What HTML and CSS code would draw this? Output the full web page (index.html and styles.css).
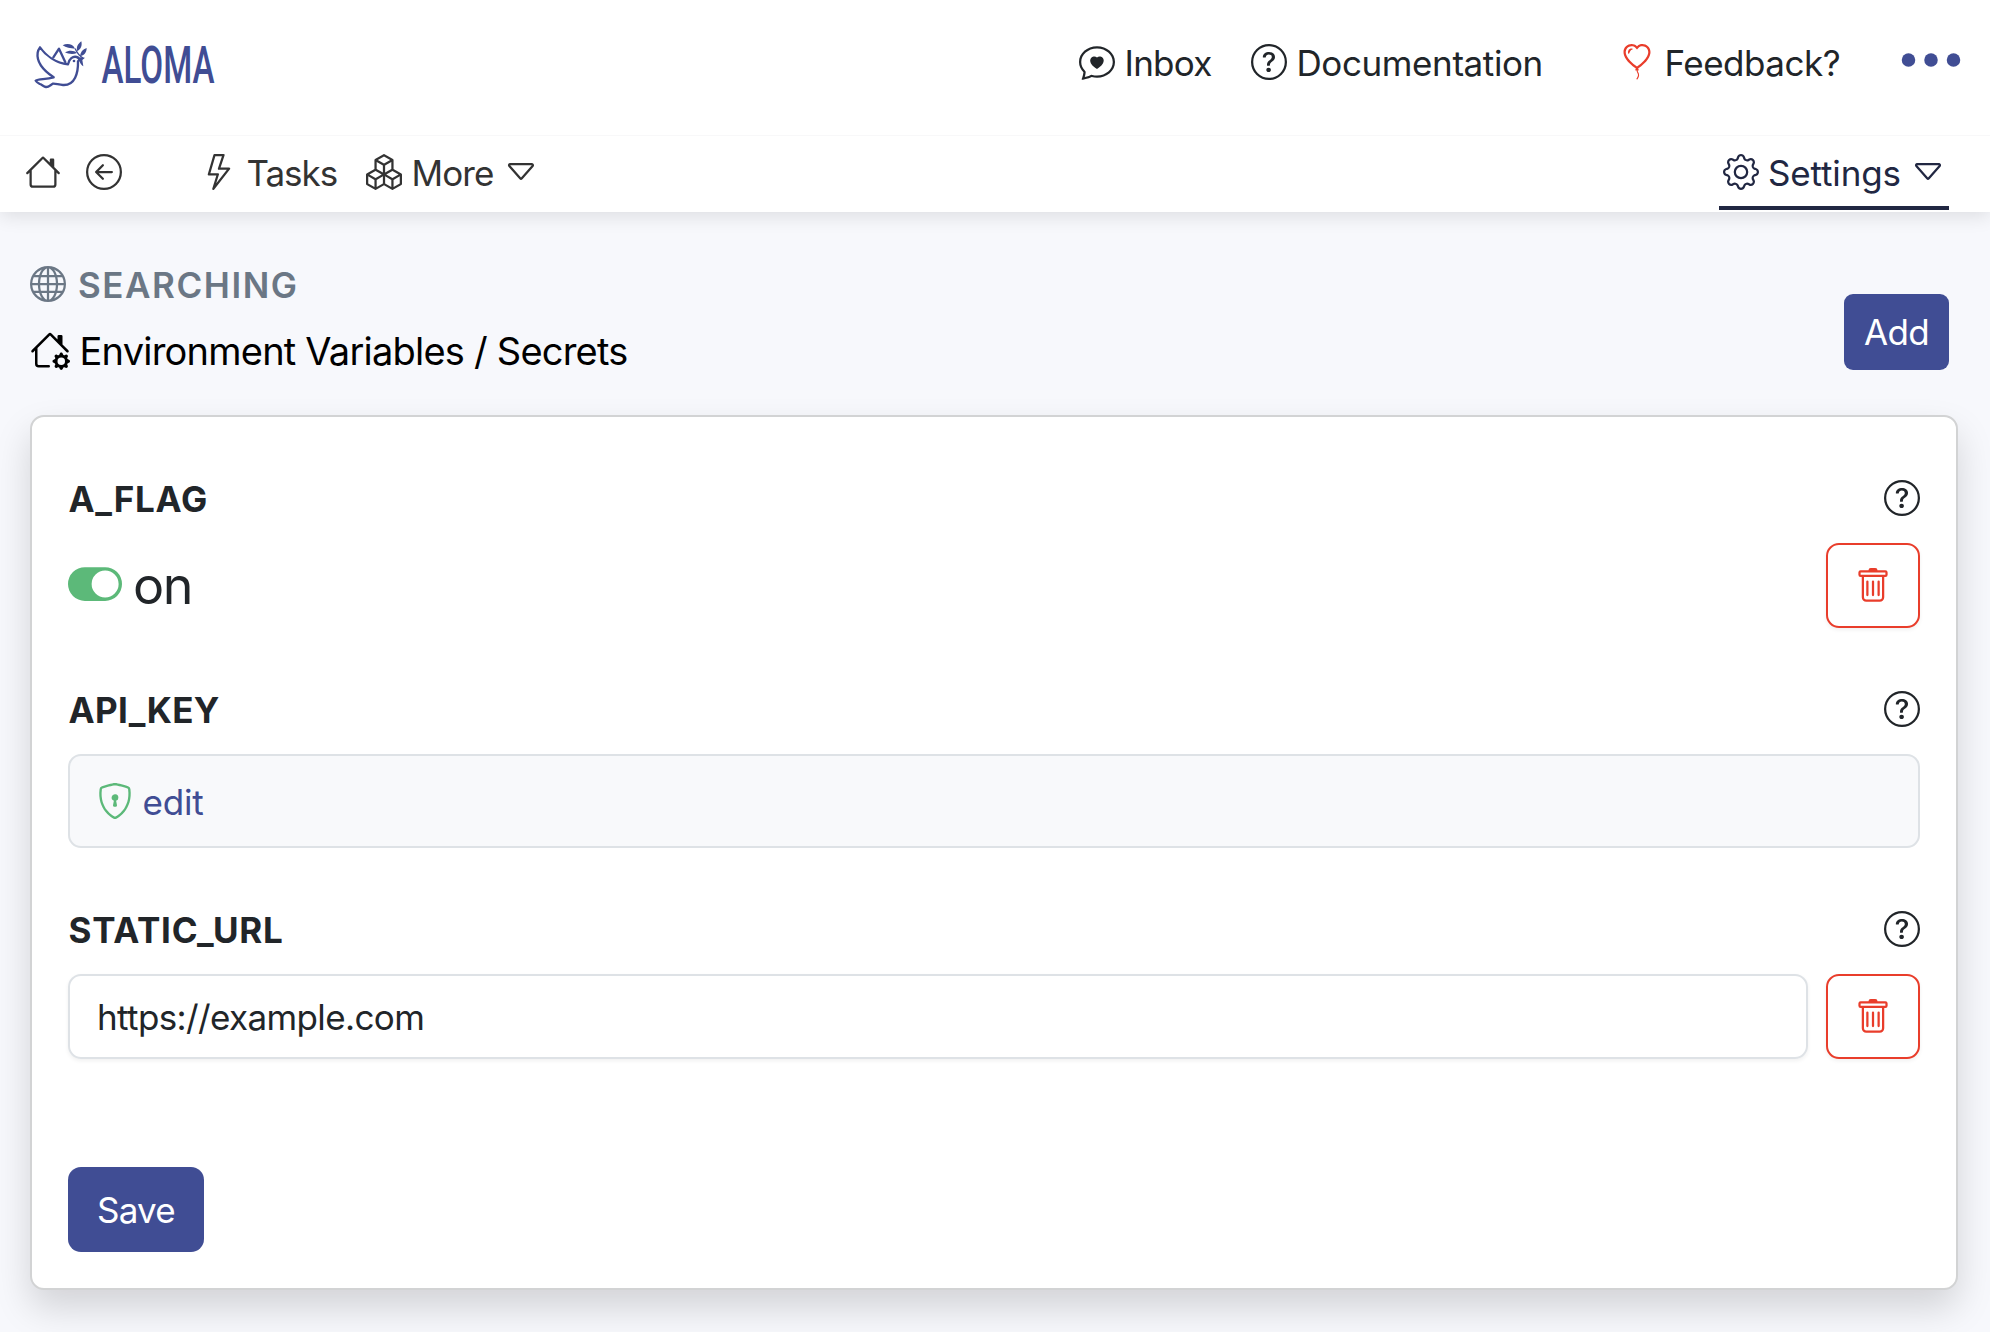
FILE: index.html
```html
<!DOCTYPE html>
<html lang="en">
<head>
<meta charset="utf-8">
<title>Environment Variables / Secrets</title>
<link rel="stylesheet" href="styles.css">
</head>
<body>
<svg class="sprite" aria-hidden="true">
  <symbol id="question" viewBox="0 0 16 16"><path d="M8 15A7 7 0 1 1 8 1a7 7 0 0 1 0 14m0 1A8 8 0 1 0 8 0a8 8 0 0 0 0 16"/><path d="M5.255 5.786a.237.237 0 0 0 .241.247h.825c.138 0 .248-.113.266-.25.09-.656.54-1.134 1.342-1.134.686 0 1.314.343 1.314 1.168 0 .635-.374.927-.965 1.371-.673.489-1.206 1.06-1.168 1.987l.003.217a.25.25 0 0 0 .25.246h.811a.25.25 0 0 0 .25-.25v-.105c0-.718.273-.927 1.01-1.486.609-.463 1.244-.977 1.244-2.056 0-1.511-1.276-2.241-2.673-2.241-1.267 0-2.655.59-2.75 2.286m1.557 5.763c0 .533.425.927 1.01.927.609 0 1.028-.394 1.028-.927 0-.552-.42-.94-1.029-.94-.584 0-1.009.388-1.009.94"/></symbol>
  <symbol id="caret" viewBox="0 0 16 16"><path d="M3.204 5h9.592L8 10.481zm-.753.659 4.796 5.48a1 1 0 0 0 1.506 0l4.796-5.48c.566-.647.106-1.659-.753-1.659H3.204a1 1 0 0 0-.753 1.659"/></symbol>
  <symbol id="trash" viewBox="0 0 16 16"><path d="M5.5 5.5A.5.5 0 0 1 6 6v6a.5.5 0 0 1-1 0V6a.5.5 0 0 1 .5-.5m2.5 0a.5.5 0 0 1 .5.5v6a.5.5 0 0 1-1 0V6a.5.5 0 0 1 .5-.5m3 .5a.5.5 0 0 0-1 0v6a.5.5 0 0 0 1 0z"/><path d="M14.5 3a1 1 0 0 1-1 1H13v9a2 2 0 0 1-2 2H5a2 2 0 0 1-2-2V4h-.5a1 1 0 0 1-1-1V2a1 1 0 0 1 1-1H6a1 1 0 0 1 1-1h2a1 1 0 0 1 1 1h3.5a1 1 0 0 1 1 1zM4.118 4 4 4.059V13a1 1 0 0 0 1 1h6a1 1 0 0 0 1-1V4.059L11.882 4zM2.5 3h11V2h-11z"/></symbol>
</svg>

<header class="topbar">
  <a class="brand">
    <svg class="dove" viewBox="100 60 165 150">
      <g fill="none" stroke="currentColor" stroke-width="7" stroke-linejoin="round" stroke-linecap="round">
        <path d="M121 82C138 106 168 129 205 133C208 116 220 108 231 111C235 112 238 115 241 118L235 124C236 158 226 197 190 195C178 195 168 190 160 191C152 195 147 202 139 201C133 200 128 195 121 192C115 189 110 187 108 182C117 176 137 179 162 172C132 152 110 126 114 98C115 91 118 86 121 82Z"/>
        <path d="M161 112L178 86L197 127"/>
        <path d="M250 114C240 108 233 101 227 87" stroke-width="4"/>
      </g>
      <circle cx="223" cy="123" r="4"/>
      <path d="M189 76C202 69 220 72 226 86C212 85 199 83 189 76ZM196 97C208 90 224 91 232 99C220 104 206 102 196 97ZM245 64C248 77 244 87 233 94C229 82 234 72 245 64ZM261 84C261 97 254 106 241 109C242 96 249 88 261 84ZM240 112L256 113L248 120L251 139C241 133 238 123 240 112Z"/>
    </svg>
    <svg class="wordmark" viewBox="0 0 120 60"><text transform="translate(1.5 43) scale(.638 1)">ALOMA</text></svg>
  </a>
  <nav class="links">
    <a class="item inbox"><svg class="icon" viewBox="0 0 16 16"><path fill-rule="evenodd" d="M2.965 12.695a1 1 0 0 0-.287-.801C1.618 10.83 1 9.468 1 8c0-3.192 3.004-6 7-6s7 2.808 7 6-3.004 6-7 6a8 8 0 0 1-2.088-.272 1 1 0 0 0-.711.074c-.387.196-1.24.57-2.634.893a11 11 0 0 0 .398-2m-.8 3.108.02-.004c1.83-.363 2.948-.842 3.468-1.105A9 9 0 0 0 8 15c4.418 0 8-3.134 8-7s-3.582-7-8-7-8 3.134-8 7c0 1.76.743 3.37 1.97 4.6a10.4 10.4 0 0 1-.524 2.318l-.003.011a11 11 0 0 1-.244.637c-.079.186.074.394.273.362a22 22 0 0 0 .693-.125M8 5.993c1.664-1.711 5.825 1.283 0 5.132-5.825-3.85-1.664-6.843 0-5.132"/></svg><span>Inbox</span></a>
    <a class="item docs"><svg class="icon"><use href="#question"/></svg><span>Documentation</span></a>
    <a class="item feedback"><svg class="icon danger" viewBox="0 0 16 16"><path fill-rule="evenodd" d="m8 2.42-.717-.737c-1.13-1.161-3.243-.777-4.01.72-.35.685-.451 1.707.236 3.062C4.16 6.753 5.52 8.32 8 10.042c2.479-1.723 3.839-3.29 4.491-4.577.687-1.355.587-2.377.236-3.061-.767-1.498-2.88-1.882-4.01-.721zm-.49 8.5c-10.78-7.44-3-13.155.359-10.063q.068.062.132.129.065-.067.132-.129c3.36-3.092 11.137 2.624.357 10.063l.235.468a.25.25 0 1 1-.448.224l-.008-.017c.008.11.02.202.037.29.054.27.161.488.419 1.003.288.578.235 1.15.076 1.629-.157.469-.422.867-.588 1.115l-.004.007a.25.25 0 1 1-.416-.278c.168-.252.4-.6.533-1.003.133-.396.163-.824-.049-1.246l-.013-.028c-.24-.48-.38-.758-.448-1.102a3 3 0 0 1-.052-.45l-.04.08a.25.25 0 1 1-.447-.224l.235-.468ZM6.013 2.06c-.649-.18-1.483.083-1.85.798-.131.258-.245.689-.08 1.335.063.244.414.198.487-.043.21-.697.627-1.447 1.359-1.692.217-.073.304-.337.084-.398"/></svg><span>Feedback?</span></a>
    <a class="dots"><svg viewBox="0 0 16 16"><circle cx="3" cy="8" r="1.5"/><circle cx="8" cy="8" r="1.5"/><circle cx="13" cy="8" r="1.5"/></svg></a>
  </nav>
</header>

<nav class="subnav">
  <a class="item"><svg class="icon" viewBox="0 0 16 16"><path d="M8.707 1.5a1 1 0 0 0-1.414 0L.646 8.146a.5.5 0 0 0 .708.708L2 8.207V13.5A1.5 1.5 0 0 0 3.5 15h9a1.5 1.5 0 0 0 1.5-1.5V8.207l.646.647a.5.5 0 0 0 .708-.708L13 5.793V2.5a.5.5 0 0 0-.5-.5h-1a.5.5 0 0 0-.5.5v1.293zM13 7.207V13.5a.5.5 0 0 1-.5.5h-9a.5.5 0 0 1-.5-.5V7.207l5-5z"/></svg></a>
  <a class="item back"><svg class="icon" viewBox="0 0 16 16"><path fill-rule="evenodd" d="M1 8a7 7 0 1 0 14 0A7 7 0 0 0 1 8m15 0A8 8 0 1 1 0 8a8 8 0 0 1 16 0m-4.5-.5a.5.5 0 0 1 0 1H5.707l2.147 2.146a.5.5 0 0 1-.708.708l-3-3a.5.5 0 0 1 0-.708l3-3a.5.5 0 1 1 .708.708L5.707 7.5z"/></svg></a>
  <a class="item tasks"><svg class="icon" viewBox="0 0 16 16"><path d="M5.52.359A.5.5 0 0 1 6 0h4a.5.5 0 0 1 .474.658L8.694 6H12.5a.5.5 0 0 1 .395.807l-7 9a.5.5 0 0 1-.873-.454L6.823 9.5H3.5a.5.5 0 0 1-.48-.641zM6.374 1 4.168 8.5H7.5a.5.5 0 0 1 .478.647L6.78 13.04 11.478 7H8a.5.5 0 0 1-.474-.658L9.306 1z"/></svg><span>Tasks</span></a>
  <a class="item more"><svg class="icon" viewBox="0 0 16 16"><path d="M7.752.066a.5.5 0 0 1 .496 0l3.75 2.143a.5.5 0 0 1 .252.434v3.995l3.498 2A.5.5 0 0 1 16 9.07v4.286a.5.5 0 0 1-.252.434l-3.75 2.143a.5.5 0 0 1-.496 0l-3.502-2-3.502 2.001a.5.5 0 0 1-.496 0l-3.75-2.143A.5.5 0 0 1 0 13.357V9.071a.5.5 0 0 1 .252-.434L3.75 6.638V2.643a.5.5 0 0 1 .252-.434zM4.25 7.504 1.508 9.071l2.742 1.567 2.742-1.567zM7.5 9.933l-2.75 1.571v3.134l2.75-1.571zm1 3.134 2.75 1.571v-3.134L8.5 9.933zm.508-3.996 2.742 1.567 2.742-1.567-2.742-1.567zm2.242-2.433V3.504L8.5 5.076V8.21zM7.5 8.21V5.076L4.75 3.504v3.134zM5.258 2.643 8 4.21l2.742-1.567L8 1.076zM15 9.933l-2.75 1.571v3.134L15 13.067zM3.75 14.638v-3.134L1 9.933v3.134z"/></svg><span>More</span><svg class="icon caret"><use href="#caret"/></svg></a>
  <a class="item settings"><svg class="icon" viewBox="0 0 16 16"><path d="M8 4.754a3.246 3.246 0 1 0 0 6.492 3.246 3.246 0 0 0 0-6.492M5.754 8a2.246 2.246 0 1 1 4.492 0 2.246 2.246 0 0 1-4.492 0"/><path d="M9.796 1.343c-.527-1.79-3.065-1.79-3.592 0l-.094.319a.873.873 0 0 1-1.255.52l-.292-.16c-1.64-.892-3.433.902-2.54 2.541l.159.292a.873.873 0 0 1-.52 1.255l-.319.094c-1.79.527-1.79 3.065 0 3.592l.319.094a.873.873 0 0 1 .52 1.255l-.16.292c-.892 1.64.901 3.434 2.541 2.54l.292-.159a.873.873 0 0 1 1.255.52l.094.319c.527 1.79 3.065 1.79 3.592 0l.094-.319a.873.873 0 0 1 1.255-.52l.292.16c1.64.893 3.434-.902 2.54-2.541l-.159-.292a.873.873 0 0 1 .52-1.255l.319-.094c1.79-.527 1.79-3.065 0-3.592l-.319-.094a.873.873 0 0 1-.52-1.255l.16-.292c.893-1.64-.902-3.433-2.541-2.54l-.292.159a.873.873 0 0 1-1.255-.52zm-2.633.283c.246-.835 1.428-.835 1.674 0l.094.319a1.873 1.873 0 0 0 2.693 1.115l.291-.16c.764-.415 1.6.42 1.184 1.185l-.159.292a1.873 1.873 0 0 0 1.116 2.692l.318.094c.835.246.835 1.428 0 1.674l-.319.094a1.873 1.873 0 0 0-1.115 2.693l.16.291c.415.764-.42 1.6-1.185 1.184l-.291-.159a1.873 1.873 0 0 0-2.693 1.116l-.094.318c-.246.835-1.428.835-1.674 0l-.094-.319a1.873 1.873 0 0 0-2.692-1.115l-.292.16c-.764.415-1.6-.42-1.184-1.185l.159-.291A1.873 1.873 0 0 0 1.945 8.93l-.319-.094c-.835-.246-.835-1.428 0-1.674l.319-.094A1.873 1.873 0 0 0 3.06 4.377l-.16-.292c-.415-.764.42-1.6 1.185-1.184l.292.159a1.873 1.873 0 0 0 2.692-1.115z"/></svg><span>Settings</span><svg class="icon caret"><use href="#caret"/></svg></a>
</nav>

<main class="page">
  <div class="page-head">
    <div class="titles">
      <div class="workspace"><svg class="icon" viewBox="0 0 16 16"><path d="M0 8a8 8 0 1 1 16 0A8 8 0 0 1 0 8m7.5-6.923c-.67.204-1.335.82-1.887 1.855A8 8 0 0 0 5.145 4H7.5zM4.09 4a9.3 9.3 0 0 1 .64-1.539 7 7 0 0 1 .597-.933A7.03 7.03 0 0 0 2.255 4zm-.582 3.5c.03-.877.138-1.718.312-2.5H1.674a7 7 0 0 0-.656 2.5zM4.847 5a12.5 12.5 0 0 0-.338 2.5H7.5V5zM8.5 5v2.5h2.99a12.5 12.5 0 0 0-.337-2.5zM4.51 8.5a12.5 12.5 0 0 0 .337 2.5H7.5V8.5zm3.99 0V11h2.653c.187-.765.306-1.608.338-2.5zM5.145 12q.208.58.468 1.068c.552 1.035 1.218 1.65 1.887 1.855V12zm.182 2.472a7 7 0 0 1-.597-.933A9.3 9.3 0 0 1 4.09 12H2.255a7 7 0 0 0 3.072 2.472M3.82 11a13.7 13.7 0 0 1-.312-2.5h-2.49c.062.89.291 1.733.656 2.5zm6.853 3.472A7 7 0 0 0 13.745 12H11.91a9.3 9.3 0 0 1-.64 1.539 7 7 0 0 1-.597.933M8.5 12v2.923c.67-.204 1.335-.82 1.887-1.855q.26-.487.468-1.068zm3.68-1h2.146c.365-.767.594-1.61.656-2.5h-2.49a13.7 13.7 0 0 1-.312 2.5m2.802-3.5a7 7 0 0 0-.656-2.5H12.18c.174.782.282 1.623.312 2.5zM11.27 2.461c.247.464.462.98.64 1.539h1.835a7 7 0 0 0-3.072-2.472c.218.284.418.598.597.933M10.855 4a8 8 0 0 0-.468-1.068C9.835 1.897 9.17 1.282 8.5 1.077V4z"/></svg><span>SEARCHING</span></div>
      <h1 class="title"><svg class="icon" viewBox="0 0 16 16"><path d="M7.293 1.5a1 1 0 0 1 1.414 0L11 3.793V2.5a.5.5 0 0 1 .5-.5h1a.5.5 0 0 1 .5.5v3.293l2.354 2.353a.5.5 0 0 1-.708.708L8 2.207l-5 5V13.5a.5.5 0 0 0 .5.5h4a.5.5 0 0 1 0 1h-4A1.5 1.5 0 0 1 2 13.5V8.207l-.646.647a.5.5 0 1 1-.708-.708z"/><path d="M11.886 9.46c.18-.613 1.048-.613 1.229 0l.043.148a.64.64 0 0 0 .921.382l.136-.074c.561-.306 1.175.308.87.869l-.075.136a.64.64 0 0 0 .382.92l.149.045c.612.18.612 1.048 0 1.229l-.15.043a.64.64 0 0 0-.38.921l.074.136c.305.561-.309 1.175-.87.87l-.136-.075a.64.64 0 0 0-.92.382l-.045.149c-.18.612-1.048.612-1.229 0l-.043-.15a.64.64 0 0 0-.921-.38l-.136.074c-.561.305-1.175-.309-.87-.87l.075-.136a.64.64 0 0 0-.382-.92l-.148-.045c-.613-.18-.613-1.048 0-1.229l.148-.043a.64.64 0 0 0 .382-.921l-.074-.136c-.306-.561.308-1.175.869-.87l.136.075a.64.64 0 0 0 .92-.382zM14 12.5a1.5 1.5 0 1 0-3 0 1.5 1.5 0 0 0 3 0"/></svg><span>Environment Variables / Secrets</span></h1>
    </div>
    <button class="btn add"><span>Add</span></button>
  </div>

  <form class="card">
    <section class="field">
      <div class="field-head"><label class="flag">A_FLAG</label><svg class="icon"><use href="#question"/></svg></div>
      <div class="field-row">
        <div class="toggle"><svg viewBox="0 0 16 16"><path d="M5 3a5 5 0 0 0 0 10h6a5 5 0 0 0 0-10zm6 9a4 4 0 1 1 0-8 4 4 0 0 1 0 8"/></svg><span>on</span></div>
        <button type="button" class="delete"><svg class="icon"><use href="#trash"/></svg></button>
      </div>
    </section>
    <section class="field">
      <div class="field-head"><label class="key">API_KEY</label><svg class="icon"><use href="#question"/></svg></div>
      <div class="secret"><svg class="icon" viewBox="0 0 16 16"><path d="M5.338 1.59a61 61 0 0 0-2.837.856.48.48 0 0 0-.328.39c-.554 4.157.726 7.19 2.253 9.188a10.7 10.7 0 0 0 2.287 2.233c.346.244.652.42.893.533q.18.085.293.118a1 1 0 0 0 .101.025 1 1 0 0 0 .1-.025q.114-.034.294-.118c.24-.113.547-.29.893-.533a10.7 10.7 0 0 0 2.287-2.233c1.527-1.997 2.807-5.031 2.253-9.188a.48.48 0 0 0-.328-.39c-.651-.213-1.75-.56-2.837-.855C9.552 1.29 8.531 1.067 8 1.067c-.53 0-1.552.223-2.662.524zM5.072.56C6.157.265 7.31 0 8 0s1.843.265 2.928.56c1.11.3 2.229.655 2.887.87a1.54 1.54 0 0 1 1.044 1.262c.596 4.477-.787 7.795-2.465 9.99a11.8 11.8 0 0 1-2.517 2.453 7 7 0 0 1-1.048.625c-.28.132-.581.24-.829.24s-.548-.108-.829-.24a7 7 0 0 1-1.048-.625 11.8 11.8 0 0 1-2.517-2.453C1.928 10.487.545 7.169 1.141 2.692A1.54 1.54 0 0 1 2.185 1.43 63 63 0 0 1 5.072.56"/><path d="M9.5 6.5a1.5 1.5 0 0 1-1 1.415l.385 1.99a.5.5 0 0 1-.491.595h-.788a.5.5 0 0 1-.49-.595l.384-1.99a1.5 1.5 0 1 1 2-1.415"/></svg><a>edit</a></div>
    </section>
    <section class="field">
      <div class="field-head"><label class="url">STATIC_URL</label><svg class="icon"><use href="#question"/></svg></div>
      <div class="field-row">
        <div class="input"><span>https://example.com</span></div>
        <button type="button" class="delete"><svg class="icon"><use href="#trash"/></svg></button>
      </div>
    </section>
    <button type="button" class="btn save"><span>Save</span></button>
  </form>
</main>
</body>
</html>
```

FILE: styles.css
```css
* { box-sizing: border-box; }

body {
  margin: 0;
  height: 1332px;
  overflow: hidden;
  background: #f7f8fc;
  color: #212529;
  font-family: Inter, "Liberation Sans", sans-serif;
  font-size: 35px;
  line-height: 54px;
}

.sprite { display: none; }
svg { display: block; flex: none; fill: currentColor; }
.icon { width: 36px; height: 36px; }
.danger { color: #e93d2b; }
span, label { white-space: nowrap; }

.topbar {
  position: relative;
  z-index: 2;
  display: flex;
  justify-content: space-between;
  height: 136px;
  padding: 0 23px 0 33px;
  background: #fff;
  border-bottom: 1px solid #f8f8f9;
}

.brand { display: flex; align-items: flex-start; gap: 12px; padding-top: 40px; color: #404d94; }
.dove { width: 55px; height: 50px; }
.wordmark { width: 120px; height: 60px; overflow: visible; font-family: Roboto, sans-serif; font-size: 52px; font-weight: 500; }

.links { display: flex; align-items: center; height: 124px; }
.item { display: flex; align-items: center; gap: 9.5px; }
.item span { padding-top: 2px; }
.inbox { width: 172px; letter-spacing: -.75px; }
.docs { width: 368px; letter-spacing: -.4px; }
.feedback { width: 276px; letter-spacing: -.5px; }
.dots { color: #404d94; padding-bottom: 4px; }
.dots svg { width: 72px; height: 72px; }

.subnav {
  position: relative;
  display: flex;
  height: 76px;
  padding: 0 41px 0 24.5px;
  background: #fff;
  color: #333;
  box-shadow: 0 4px 18px rgba(0, 0, 0, .11);
}
.subnav .item { height: 74px; padding-bottom: 2px; }
.back { margin-left: 25.5px; }
.tasks { margin-left: 79px; width: 165px; letter-spacing: -1.05px; }
.more { letter-spacing: -.9px; }
.caret { margin-left: -.5px; }
.settings { margin-left: auto; width: 230px; padding-left: 3.5px; color: #212742; border-bottom: 4px solid #212742; letter-spacing: -.15px; }
.subnav .settings { padding-top: 2px; padding-bottom: 0; }

.page { padding: 54px 32px 0 30px; }
.page-head { display: flex; justify-content: space-between; align-items: flex-end; height: 104px; padding-right: 9px; }
.titles { display: flex; flex-direction: column; gap: 28px; }
.workspace { display: flex; align-items: center; gap: 12px; height: 36px; color: #6b7785; font-weight: 600; letter-spacing: 1.55px; }
.workspace span { padding-top: 2px; }
.title { display: flex; align-items: center; gap: 9.5px; height: 40px; margin: 0; color: #000; font-size: 38px; font-weight: 400; letter-spacing: -.78px; }
.title .icon { width: 40px; height: 40px; }
.title span { padding-top: 1px; }

.btn {
  display: flex;
  align-items: center;
  justify-content: center;
  padding: 0;
  border: 0;
  background: #404d94;
  color: #fff;
  font: inherit;
  letter-spacing: -.7px;
}
.add { width: 105px; height: 76px; border-radius: 9px; }
.save { width: 136px; height: 85px; margin-top: 108px; border-radius: 13px; }

.card {
  margin-top: 45px;
  padding: 63px 36px 36px;
  background: #fff;
  border: 2px solid #d2d3d4;
  border-radius: 14px;
  box-shadow: 0 18px 36px rgba(0, 0, 0, .15);
}
.field { margin-bottom: 63px; }
.field-head { display: flex; align-items: center; justify-content: space-between; height: 36px; margin-bottom: 27px; }
.field-head label { padding: 1px 0 0 .5px; font-weight: 700; }
.flag { letter-spacing: .7px; }
.key { letter-spacing: .3px; }
.url { letter-spacing: .75px; }
.field-row { display: flex; justify-content: space-between; gap: 18px; height: 85px; }
.toggle { display: flex; align-items: center; gap: 11px; font-size: 52px; letter-spacing: -1.5px; }
.toggle svg { width: 54px; height: 54px; margin-top: -3px; color: #5cb979; }
.delete {
  display: flex;
  align-items: center;
  justify-content: center;
  width: 94px;
  height: 85px;
  padding: 0;
  background: #fff;
  border: 2px solid #e93d2b;
  border-radius: 13px;
  color: #e93d2b;
  box-shadow: 0 2px 4px rgba(0, 0, 0, .06);
}
.input, .secret {
  display: flex;
  align-items: center;
  border: 2px solid #dee2e6;
  border-radius: 13px;
}
.input { flex: 1; padding: 0 27px; box-shadow: 0 2px 4px rgba(0, 0, 0, .06); letter-spacing: -.62px; }
.secret { height: 94px; padding: 0 27px; gap: 9.5px; background: #f8f9fb; color: #5cb979; }
.secret a { padding-top: 1px; color: #404d94; letter-spacing: -.15px; }
```
